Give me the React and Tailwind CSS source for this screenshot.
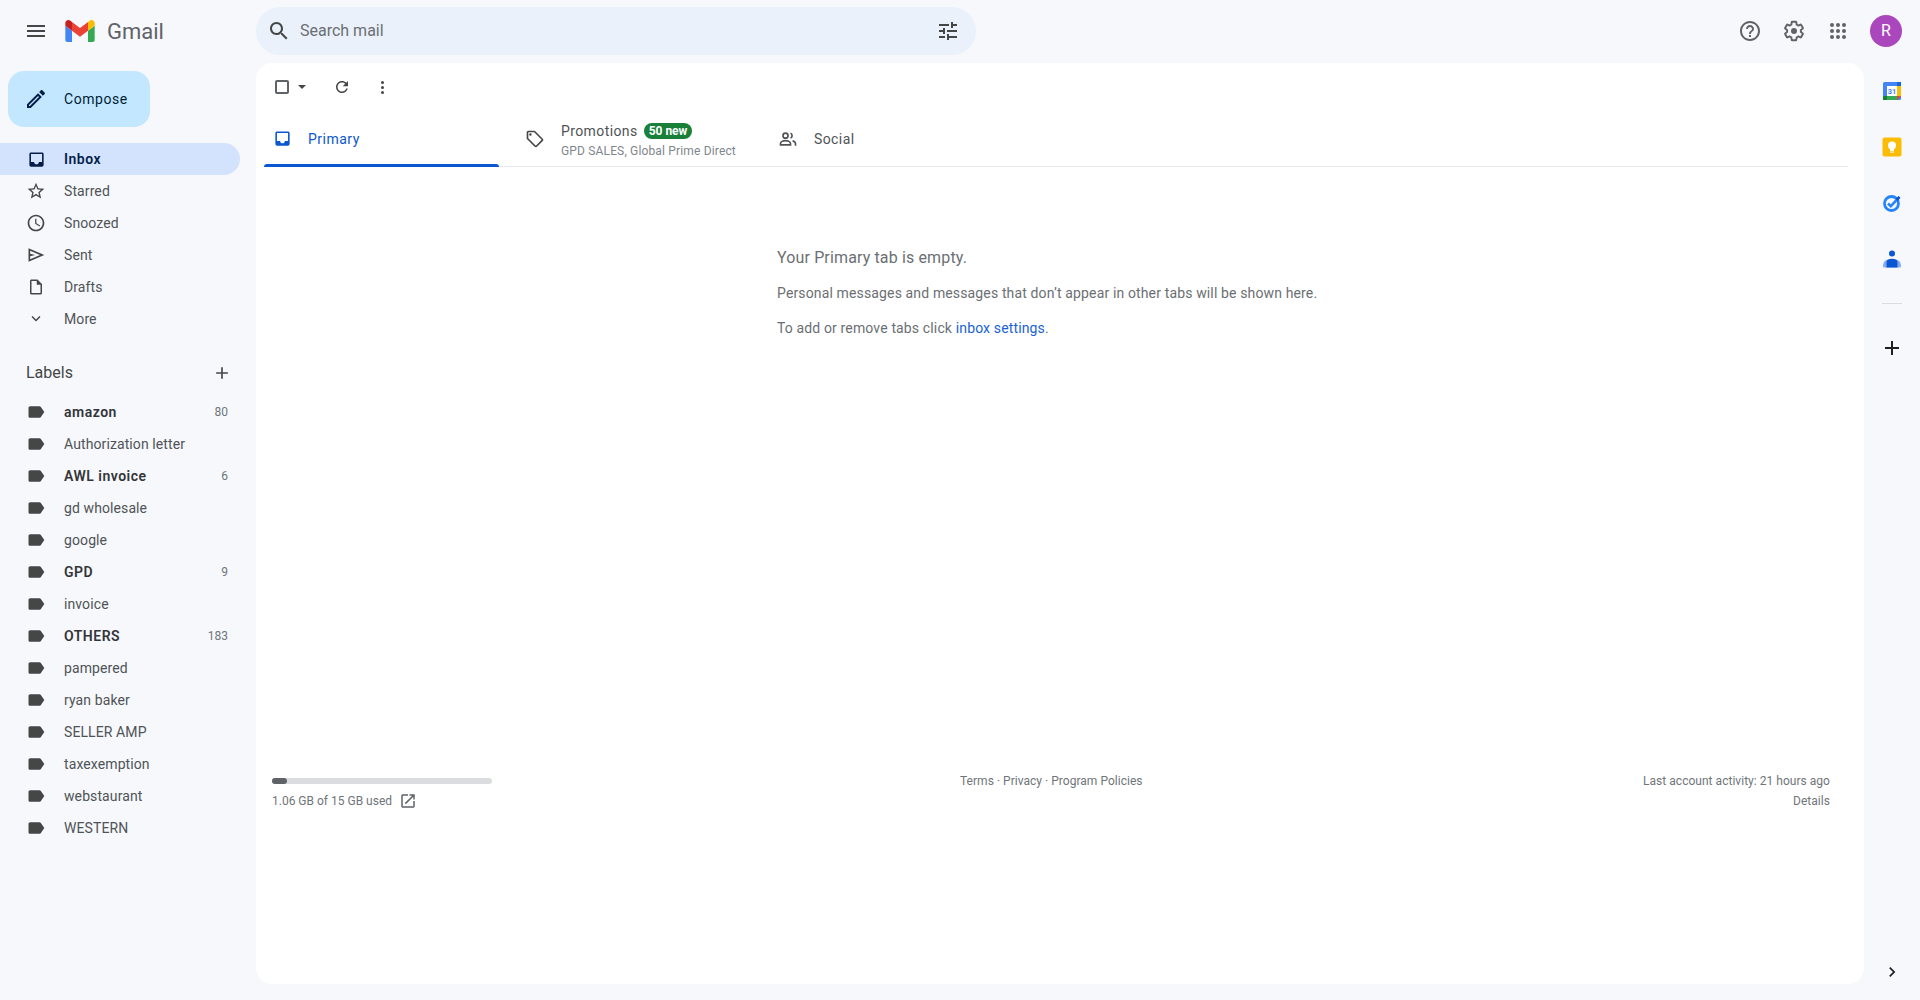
import React from 'react';

const ICONS = {
  menu: 'M3 18h18v-2H3v2zm0-5h18v-2H3v2zm0-7v2h18V6H3z',
  edit: 'M3 17.25V21h3.75L17.81 9.94l-3.75-3.75L3 17.25zM5.92 19H5v-.92l9.06-9.06.92.92L5.92 19zM20.71 5.63l-2.34-2.34c-.2-.2-.45-.29-.71-.29s-.51.1-.7.29l-1.83 1.83 3.75 3.75 1.83-1.83c.39-.39.39-1.02 0-1.41z',
  inbox: 'M19 3H5c-1.1 0-2 .9-2 2v14c0 1.1.9 2 2 2h14c1.1 0 2-.9 2-2V5c0-1.1-.9-2-2-2zm0 12h-4c0 1.66-1.35 3-3 3s-3-1.34-3-3H5V5h14v10z',
  star: 'M22 9.24l-7.19-.62L12 2 9.19 8.63 2 9.24l5.46 4.73L5.82 21 12 17.27 18.18 21l-1.63-7.03L22 9.24zM12 15.4l-3.76 2.27 1-4.28-3.32-2.88 4.38-.38L12 6.1l1.71 4.04 4.38.38-3.32 2.88 1 4.28L12 15.4z',
  clock: 'M11.99 2C6.47 2 2 6.48 2 12s4.47 10 9.99 10C17.52 22 22 17.52 22 12S17.52 2 11.99 2zM12 20c-4.42 0-8-3.58-8-8s3.58-8 8-8 8 3.58 8 8-3.58 8-8 8zm.5-13H11v6l5.25 3.15.75-1.23-4.5-2.67z',
  send: 'M3 20V4L22 12ZM5 17 16.85 12 5 7V10.5L11 12 5 13.5Z',
  draft: 'M14 2H6c-1.1 0-1.99.9-1.99 2L4 20c0 1.1.89 2 1.99 2H18c1.1 0 2-.9 2-2V8l-6-6zM6 20V4h7v5h5v11H6z',
  more: 'M12 15.4 6 9.4 7.4 8 12 12.6 16.6 8 18 9.4Z',
  label: 'M17.63 5.84C17.27 5.33 16.67 5 16 5L5 5.01C3.9 5.01 3 5.9 3 7v10c0 1.1.9 1.99 2 1.99L16 19c.67 0 1.27-.33 1.63-.84L22 12l-4.37-6.16z',
  add: 'M19 13h-6v6h-2v-6H5v-2h6V5h2v6h6v2z',
  search: 'M15.5 14h-.79l-.28-.27C15.41 12.59 16 11.11 16 9.5 16 5.91 13.09 3 9.5 3S3 5.91 3 9.5 5.91 16 9.5 16c1.61 0 3.09-.59 4.23-1.57l.27.28v.79l5 4.99L20.49 19l-4.99-5zm-6 0C7.01 14 5 11.99 5 9.5S7.01 5 9.5 5 14 7.01 14 9.5 11.99 14 9.5 14z',
  tune: 'M3 17v2h6v-2H3zM3 5v2h10V5H3zm10 16v-2h8v-2h-8v-2h-2v6h2zM7 9v2H3v2h4v2h2V9H7zm14 4v-2H11v2h10zm-6-4h2V7h4V5h-4V3h-2v6z',
  help: 'M11 18h2v-2h-2v2zm1-16C6.48 2 2 6.48 2 12s4.48 10 10 10 10-4.48 10-10S17.52 2 12 2zm0 18c-4.41 0-8-3.59-8-8s3.59-8 8-8 8 3.59 8 8-3.59 8-8 8zm0-14c-2.21 0-4 1.79-4 4h2c0-1.1.9-2 2-2s2 .9 2 2c0 2-3 1.75-3 5h2c0-2.25 3-2.5 3-5 0-2.21-1.79-4-4-4z',
  refresh: 'M17.65 6.35C16.2 4.9 14.21 4 12 4c-4.42 0-7.99 3.58-7.99 8s3.57 8 7.99 8c3.73 0 6.84-2.55 7.73-6h-2.08c-.82 2.33-3.04 4-5.65 4-3.31 0-6-2.69-6-6s2.69-6 6-6c1.66 0 3.14.69 4.22 1.78L13 11h7V4l-2.35 2.35z',
  tag: 'M21.41 11.58l-9-9C12.05 2.22 11.55 2 11 2H4c-1.1 0-2 .9-2 2v7c0 .55.22 1.05.59 1.42l9 9c.36.36.86.58 1.41.58s1.05-.22 1.41-.59l7-7c.37-.36.59-.86.59-1.41s-.23-1.06-.59-1.42zM13 20.01L4 11V4h7v-.01l9 9-7 7.02zM6.5 5A1.5 1.5 0 1 0 6.5 8A1.5 1.5 0 1 0 6.5 5z',
  open: 'M19 19H5V5h7V3H5c-1.11 0-2 .9-2 2v14c0 1.1.89 2 2 2h14c1.1 0 2-.9 2-2v-7h-2v7zM14 3v2h3.59l-9.83 9.83 1.41 1.41L19 6.41V10h2V3h-7z',
  chevron: 'M8.59 16.59L13.17 12 8.59 7.41 10 6l6 6-6 6z',
};

const GEAR = 'M19.43 12.98c.04-.32.07-.64.07-.98s-.03-.66-.07-.98l2.11-1.65c.19-.15.24-.42.12-.64l-2-3.46c-.12-.22-.39-.3-.61-.22l-2.49 1c-.52-.4-1.08-.73-1.69-.98l-.38-2.65C14.46 2.18 14.25 2 14 2h-4c-.25 0-.46.18-.49.42l-.38 2.65c-.61.25-1.17.59-1.69.98l-2.49-1c-.23-.09-.49 0-.61.22l-2 3.46c-.13.22-.07.49.12.64l2.11 1.65c-.04.32-.07.65-.07.98s.03.66.07.98l-2.11 1.65c-.19.15-.24.42-.12.64l2 3.46c.12.22.39.3.61.22l2.49-1c.52.4 1.08.73 1.69.98l.38 2.65c.03.24.24.42.49.42h4c.25 0 .46-.18.49-.42l.38-2.65c.61-.25 1.17-.59 1.69-.98l2.49 1c.23.09.49 0 .61-.22l2-3.46c.12-.22.07-.49-.12-.64l-2.11-1.65z';

const Icon = ({ name, className }) => (
  <svg viewBox="0 0 24 24" fill="currentColor" fillRule="evenodd" className={className}>
    <path d={ICONS[name]} />
  </svg>
);

const GmailLogo = () => (
  <svg viewBox="52 42 88 66" className="w-[30px] h-[22px]">
    <path fill="#4285f4" d="M58 108h14V74L52 59v43c0 3.32 2.69 6 6 6" />
    <path fill="#34a853" d="M120 108h14c3.32 0 6-2.69 6-6V59l-20 15" />
    <path fill="#fbbc04" d="M120 48v26l20-15v-8c0-7.42-8.47-11.65-14.4-7.2" />
    <path fill="#ea4335" d="M72 74V48l24 18 24-18v26L96 92" />
    <path fill="#c5221f" d="M52 51v8l20 15V48l-5.6-4.2c-5.94-4.45-14.4-.22-14.4 7.2" />
  </svg>
);

const SettingsIcon = () => (
  <svg viewBox="0 0 24 24" className="w-6 h-6 text-[#5f6368]">
    <path d={GEAR} fill="none" stroke="currentColor" strokeWidth="2.1" transform="translate(0.96 0.96) scale(0.92)" />
    <circle cx="12" cy="12" r="3" fill="currentColor" />
  </svg>
);

const AppsIcon = () => (
  <svg viewBox="0 0 24 24" fill="currentColor" className="w-6 h-6 text-[#5f6368]">
    {[6, 12, 18].flatMap((y) =>
      [6, 12, 18].map((x) => <circle key={`${x}-${y}`} cx={x} cy={y} r="2" />)
    )}
  </svg>
);

const PeopleIcon = () => (
  <svg viewBox="0 0 24 24" fill="none" stroke="currentColor" strokeWidth="2" className="w-5 h-5">
    <circle cx="9" cy="8" r="3" />
    <path d="M3 19v-1.500c0-2 3-3.500 6-3.500s6 1.500 6 3.500V19z" />
    <path d="M15 5.200a3 3 0 0 1 0 5.600" />
    <path d="M17.500 14.200c2 .6 3.500 1.700 3.500 3.300V20" />
  </svg>
);

const CalendarIcon = () => (
  <svg viewBox="0 0 20 20" className="w-5 h-5">
    <rect x="1" y="1" width="18" height="18" rx="1.500" fill="#4285f4" />
    <rect x="15" y="5" width="4" height="10" fill="#fbbc04" />
    <rect x="1" y="15" width="14" height="4" fill="#34a853" />
    <rect x="15" y="1" width="4" height="4" fill="#1967d2" />
    <rect x="1" y="15" width="4" height="4" fill="#188038" />
    <path d="M15 15h4l-4 4z" fill="#ea4335" />
    <rect x="5" y="5" width="10" height="10" fill="#fff" />
    <text x="10" y="13" textAnchor="middle" fontSize="7.500" fontWeight="700" fill="#4285f4" fontFamily="Roboto, sans-serif">31</text>
  </svg>
);

const KeepIcon = () => (
  <svg viewBox="0 0 20 20" className="w-5 h-5">
    <rect x="0.500" y="0.500" width="19" height="19" rx="2" fill="#fbbc04" />
    <circle cx="10" cy="8.500" r="4" fill="#fff" />
    <rect x="8" y="12" width="4" height="2" fill="#fff" />
    <rect x="8" y="14.600" width="4" height="1" fill="#fff" />
  </svg>
);

const TasksIcon = () => (
  <svg viewBox="0 0 20 20" className="w-5 h-5">
    <circle cx="9.500" cy="10.500" r="7" fill="none" stroke="#2684fc" strokeWidth="2.800" />
    <path d="M6 10.500l2.800 2.600 8.500-9" fill="none" stroke="#2684fc" strokeWidth="2.600" />
    <path d="M14.500 7l3-3.200" fill="none" stroke="#0b57d0" strokeWidth="2.600" />
  </svg>
);

const ContactsIcon = () => (
  <svg viewBox="0 0 20 20" className="w-5 h-5">
    <circle cx="10" cy="4.500" r="3" fill="#0b57d0" />
    <path d="M1 17c0-4 2-7 9-7s9 3 9 7c0 1-.7 1.500-1.500 1.500h-15C1.700 18.500 1 18 1 17z" fill="#85abf2" />
    <path d="M4.500 18.500V13c0-2 2-3.300 5.500-3.300s5.500 1.300 5.500 3.300v5.500z" fill="#0b57d0" />
  </svg>
);

const NAV = [
  { icon: 'star', text: 'Starred', big: true },
  { icon: 'clock', text: 'Snoozed', big: true },
  { icon: 'send', text: 'Sent', big: true },
  { icon: 'draft', text: 'Drafts' },
  { icon: 'more', text: 'More' },
];

const LABELS = [
  { text: 'amazon', count: '80' },
  { text: 'Authorization letter' },
  { text: 'AWL invoice', count: '6' },
  { text: 'gd wholesale' },
  { text: 'google' },
  { text: 'GPD', count: '9' },
  { text: 'invoice' },
  { text: 'OTHERS', count: '183' },
  { text: 'pampered' },
  { text: 'ryan baker' },
  { text: 'SELLER AMP' },
  { text: 'taxexemption' },
  { text: 'webstaurant' },
  { text: 'WESTERN' },
];

const Header = () => (
  <header className="flex h-[63px] shrink-0">
    <div className="w-[256px] flex items-center h-[62px] pl-[24px]">
      <Icon name="menu" className="w-6 h-6 text-[#444746]" />
      <div className="ml-[17px]"><GmailLogo /></div>
      <span className="ml-[12px] text-[22px] text-[#5f6368]">Gmail</span>
    </div>
    <div className="mt-[7px] w-[720px] h-12 rounded-full bg-[#eaf1fb] flex items-center pl-[11px] pr-[16px]">
      <Icon name="search" className="w-6 h-6 text-[#444746]" />
      <span className="ml-[9px] text-base text-[#6b6f73]">Search mail</span>
      <Icon name="tune" className="w-6 h-6 text-[#444746] ml-auto" />
    </div>
    <div className="ml-auto flex items-center h-[62px] pr-[18px]">
      <div className="w-[44px] flex justify-center"><Icon name="help" className="w-6 h-6 text-[#5f6368]" /></div>
      <div className="w-[44px] flex justify-center"><SettingsIcon /></div>
      <div className="w-[44px] flex justify-center"><AppsIcon /></div>
      <div className="ml-[10px] w-8 h-8 rounded-full bg-[#ab47bc] text-white text-base flex items-center justify-center">R</div>
    </div>
  </header>
);

const Sidebar = () => (
  <aside className="w-[256px] shrink-0">
    <div className="mt-2 ml-2 w-[142px] h-14 rounded-2xl bg-[#c2e7ff] flex items-center pl-[16px] text-[#001d35]">
      <Icon name="edit" className="w-6 h-6 text-[#041e49]" />
      <span className="ml-[16px] text-sm tracking-[0.55px]">Compose</span>
    </div>
    <nav className="mt-4">
      <div className="w-[240px] h-8 rounded-r-full bg-[#d3e3fd] flex items-center pl-[26.500px] text-sm font-semibold tracking-[0.5px] text-[#041e49]">
        <Icon name="inbox" className="w-[19px] h-[19px]" />
        <span className="ml-[18.500px]">Inbox</span>
      </div>
      {NAV.map((n) => (
        <div key={n.text} className="w-[240px] h-8 flex items-center text-sm tracking-[0.1px] text-[#505356]">
          <div className="w-[64px] flex justify-center pl-[8px]">
            <Icon name={n.icon} className={n.big ? 'w-5 h-5 text-[#444746]' : 'w-[18px] h-[18px] text-[#444746]'} />
          </div>
          <span>{n.text}</span>
        </div>
      ))}
    </nav>
    <div className="mt-[22px] w-[240px] h-8 flex items-center justify-between pl-[26px] pr-[8px] text-base text-[#444746]">
      <span>Labels</span>
      <Icon name="add" className="w-5 h-5" />
    </div>
    <div className="mt-[7px]">
      {LABELS.map((l) => (
        <div key={l.text} className={`w-[240px] h-8 flex items-center pl-[26px] pr-[12px] text-sm ${l.count ? 'font-semibold tracking-[0.5px] text-[#333538]' : 'tracking-[0.1px] text-[#505356]'}`}>
          <Icon name="label" className="w-5 h-5 text-[#444746]" />
          <span className="ml-[18px]">{l.text}</span>
          {l.count && <span className="ml-auto text-xs font-normal tracking-normal text-[#70757a]">{l.count}</span>}
        </div>
      ))}
    </div>
  </aside>
);

const Tabs = () => (
  <div className="mt-1 ml-2 mr-4 h-[52px] flex border-b border-[#e8eaed]">
    <div className="relative w-[235px] flex items-center pl-[9px] pb-[4px] text-sm tracking-[0.5px] text-[#0b57d0]">
      <Icon name="inbox" className="w-[19px] h-[19px]" />
      <span className="ml-[16px]">Primary</span>
      <div className="absolute left-0 right-0 -bottom-px h-[3px] rounded-t-[3px] bg-[#0b57d0]" />
    </div>
    <div className="w-[271px] flex items-center pl-[26px] pb-[1px] text-[#505356]">
      <Icon name="tag" className="w-5 h-5 mb-[3px] text-[#444746]" />
      <div className="ml-[16px]">
        <div className="flex items-center text-sm tracking-[0.4px]">
          Promotions
          <span className="ml-[6px] h-4 px-[5px] rounded-full bg-[#188038] text-white text-xs font-bold tracking-normal leading-4">50 new</span>
        </div>
        <div className="mt-[2px] text-xs tracking-[0.16px] text-[#80868b]">GPD SALES, Global Prime Direct</div>
      </div>
    </div>
    <div className="flex items-center pl-[8px] pb-[4px] text-sm tracking-[0.4px] text-[#505356]">
      <PeopleIcon />
      <span className="ml-[16px]">Social</span>
    </div>
  </div>
);

const MainCard = () => (
  <main className="flex-1 bg-white rounded-2xl min-w-0">
    <div className="h-12 flex items-center pl-[17px] text-[#444746]">
      <div className="w-[18px] h-[18px] flex items-center justify-center">
        <div className="w-[14px] h-[14px] border-2 border-[#5f6368] rounded-[2px]" />
      </div>
      <div className="ml-[7px] w-0 h-0 border-x-[4px] border-x-transparent border-t-[4px] border-t-[#444746]" />
      <Icon name="refresh" className="ml-[27px] w-[18px] h-[18px]" />
      <div className="ml-[22px] w-[18px] flex flex-col items-center gap-[2px]">
        <div className="w-[3px] h-[3px] rounded-full bg-[#444746]" />
        <div className="w-[3px] h-[3px] rounded-full bg-[#444746]" />
        <div className="w-[3px] h-[3px] rounded-full bg-[#444746]" />
      </div>
    </div>
    <Tabs />
    <div className="h-[604px] pl-[521px] pt-[80px] tracking-[0.14px] text-[#6b6f73]">
      <div className="text-base leading-[22px]">Your Primary tab is empty.</div>
      <div className="mt-[14px] text-sm leading-5">Personal messages and messages that don’t appear in other tabs will be shown here.</div>
      <div className="mt-[15px] text-sm leading-5">
        To add or remove tabs click <span className="text-[#1a62d6]">inbox settings</span>.
      </div>
    </div>
    <div className="flex pl-4 pr-[34px] text-xs text-[#70757a]">
      <div className="w-[688px]">
        <div className="mt-[7px] w-[220px] h-[6px] rounded-full bg-[#dadce0]">
          <div className="w-[15px] h-[6px] rounded-full bg-[#5f6368]" />
        </div>
        <div className="mt-[7px] flex items-center h-5">
          1.06 GB of 15 GB used
          <Icon name="open" className="ml-[7px] w-[18px] h-[18px] text-[#5f6368]" />
        </div>
      </div>
      <div className="leading-5 tracking-[0.03px]">Terms · Privacy · Program Policies</div>
      <div className="ml-auto text-right leading-5 tracking-[0.03px]">
        <div>Last account activity: 21 hours ago</div>
        <div>Details</div>
      </div>
    </div>
  </main>
);

const Rail = () => (
  <aside className="w-14 shrink-0 flex flex-col items-center">
    {[CalendarIcon, KeepIcon, TasksIcon, ContactsIcon].map((Comp, i) => (
      <div key={i} className="h-14 flex items-center justify-center"><Comp /></div>
    ))}
    <div className="mt-4 w-5 h-px bg-[#dadce0]" />
    <div className="mt-[32px] h-6 flex items-center"><Icon name="add" className="w-6 h-6 text-[#1f1f1f]" /></div>
    <div className="mt-auto h-6 flex items-center"><Icon name="chevron" className="w-5 h-5 text-[#1f1f1f]" /></div>
  </aside>
);

export default function App() {
  return (
    <div className="h-screen flex flex-col bg-[#f6f8fc] overflow-hidden font-[Roboto,sans-serif]">
      <Header />
      <div className="flex-1 min-h-0 flex pb-4">
        <Sidebar />
        <MainCard />
        <Rail />
      </div>
    </div>
  );
}
